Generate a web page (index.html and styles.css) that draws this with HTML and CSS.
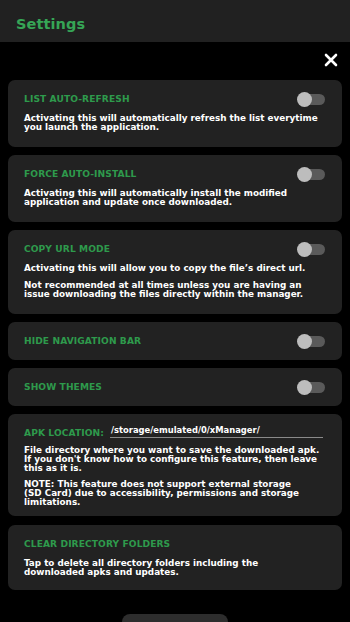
FILE: index.html
```html
<!DOCTYPE html>
<html lang="en">
<head>
<meta charset="utf-8">
<title>Settings</title>
<link rel="stylesheet" href="styles.css">
</head>
<body>
<header class="topbar"><h1 class="topbar-title">Settings</h1></header>
<div class="close-row">
  <svg class="close-icon" viewBox="0 0 14 14" width="14" height="14" aria-label="Close">
    <path d="M2 2 L12 12 M12 2 L2 12" stroke="#fff" stroke-width="2.6" stroke-linecap="round" fill="none"/>
  </svg>
</div>
<main class="list">
  <section class="card">
    <div class="card-head"><span class="card-title">LIST AUTO-REFRESH</span><span class="switch"><span class="thumb"></span></span></div>
    <p class="desc">Activating this will automatically refresh the list everytime<br>you launch the application.</p>
  </section>
  <section class="card">
    <div class="card-head"><span class="card-title">FORCE AUTO-INSTALL</span><span class="switch"><span class="thumb"></span></span></div>
    <p class="desc">Activating this will automatically install the modified<br>application and update once downloaded.</p>
  </section>
  <section class="card">
    <div class="card-head"><span class="card-title">COPY URL MODE</span><span class="switch"><span class="thumb"></span></span></div>
    <p class="desc">Activating this will allow you to copy the file’s direct url.</p>
    <p class="desc desc-gap">Not recommended at all times unless you are having an<br>issue downloading the files directly within the manager.</p>
  </section>
  <section class="card card-compact">
    <div class="card-head"><span class="card-title">HIDE NAVIGATION BAR</span><span class="switch"><span class="thumb"></span></span></div>
  </section>
  <section class="card card-compact">
    <div class="card-head"><span class="card-title">SHOW THEMES</span><span class="switch"><span class="thumb"></span></span></div>
  </section>
  <section class="card card-location">
    <div class="location-row"><span class="card-title">APK LOCATION:</span><span class="location-input">/storage/emulated/0/xManager/</span></div>
    <p class="desc">File directory where you want to save the downloaded apk.<br>If you don't know how to configure this feature, then leave<br>this as it is.</p>
    <p class="desc desc-note">NOTE: This feature does not support external storage<br>(SD Card) due to accessibility, permissions and storage<br>limitations.</p>
  </section>
  <section class="card card-clear">
    <div class="card-head"><span class="card-title">CLEAR DIRECTORY FOLDERS</span></div>
    <p class="desc">Tap to delete all directory folders including the<br>downloaded apks and updates.</p>
  </section>
</main>
<div class="bottom"><div class="bottom-button"></div></div>
</body>
</html>
```
FILE: styles.css
```css
html, body {
  margin: 0;
  padding: 0;
  background: #000;
  overflow: hidden;
}
body {
  font-family: "DejaVu Sans", "Liberation Sans", sans-serif;
  font-weight: bold;
  color: #fff;
  width: 350px;
  height: 622px;
}
.topbar {
  background: #212121;
  height: 42px;
  box-sizing: border-box;
  display: flex;
  align-items: center;
  padding: 5px 16px 0;
}
.topbar-title {
  margin: 0;
  font-size: 14.5px;
  color: #36a556;
  font-weight: bold;
  letter-spacing: 0.1px;
}
.close-row {
  display: flex;
  justify-content: flex-end;
  padding: 11px 12px 13px;
}
.close-icon {
  display: block;
}
.list {
  display: flex;
  flex-direction: column;
  gap: 8px;
  padding: 0 8px;
}
.card {
  background: #222222;
  border-radius: 7px;
  padding: 12px 16px 15px;
}
.card-compact {
  padding-bottom: 12px;
}
.card-head {
  display: flex;
  align-items: center;
  justify-content: space-between;
  height: 14px;
}
.card-title {
  font-size: 9.1px;
  color: #2e9a4c;
  letter-spacing: 0.1px;
}
.switch {
  position: relative;
  width: 28px;
  height: 15px;
  margin-right: 1px;
  display: flex;
  align-items: center;
}
.switch::before {
  content: "";
  display: block;
  width: 24px;
  height: 11px;
  margin-left: 4px;
  border-radius: 6px;
  background: #5a5a5a;
}
.thumb {
  position: absolute;
  left: 0;
  top: 0;
  width: 15px;
  height: 15px;
  border-radius: 50%;
  background: #bdbdbd;
}
.desc {
  margin: 8px 0 0;
  font-size: 8.8px;
  line-height: 9px;
  color: #fff;
  white-space: nowrap;
}
.desc-gap {
  margin-top: 8px;
}
.card-location {
  padding-top: 9px;
  padding-bottom: 9px;
}
.desc-note {
  margin-top: 7px;
}
.card-clear {
  margin-top: 1px;
  padding-bottom: 13px;
}
.location-row {
  display: flex;
  align-items: flex-end;
  gap: 6px;
  height: 15px;
}
.location-input {
  flex: 1;
  font-size: 8.4px;
  font-weight: bold;
  color: #fff;
  border-bottom: 1px solid #8a8a8a;
  padding: 0 0 2px 1px;
  margin-right: 3px;
}
.bottom {
  display: flex;
  justify-content: center;
  padding-top: 24px;
}
.bottom-button {
  width: 106px;
  height: 34px;
  border-radius: 8px;
  background: #2d2d2d;
  margin-left: -1px;
}
```
